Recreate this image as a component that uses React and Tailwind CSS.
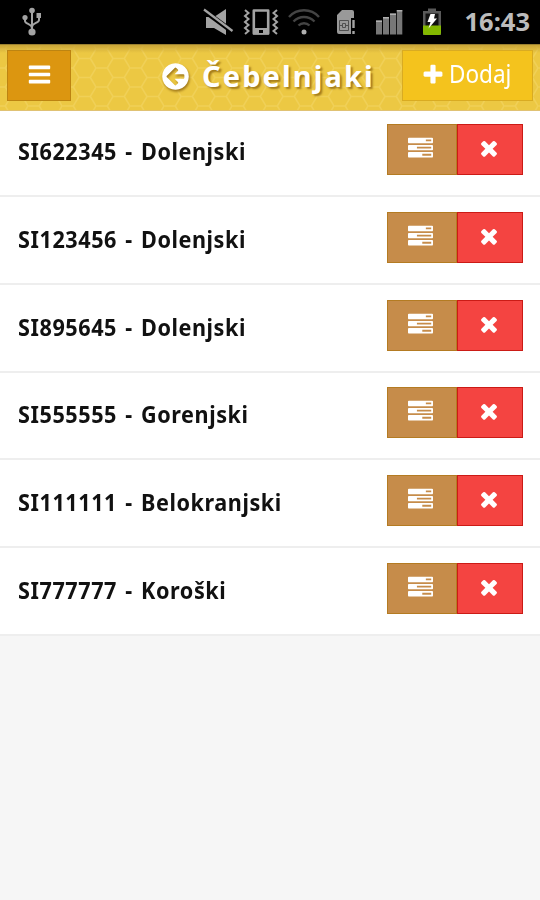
import React from 'react'

const HIVES = [
  'SI622345 - Dolenjski',
  'SI123456 - Dolenjski',
  'SI895645 - Dolenjski',
  'SI555555 - Gorenjski',
  'SI111111 - Belokranjski',
  'SI777777 - Koroški',
]

const GLYPHS = {
  bars: 'M1664 1344v128q0 26-19 45t-45 19h-1408q-26 0-45-19t-19-45v-128q0-26 19-45t45-19h1408q26 0 45 19t19 45zm0-512v128q0 26-19 45t-45 19h-1408q-26 0-45-19t-19-45v-128q0-26 19-45t45-19h1408q26 0 45 19t19 45zm0-512v128q0 26-19 45t-45 19h-1408q-26 0-45-19t-19-45v-128q0-26 19-45t45-19h1408q26 0 45 19t19 45z',
  back: 'M1408 960v-128q0-26-19-45t-45-19h-502l189-189q19-19 19-45t-19-45l-91-91q-18-18-45-18t-45 18l-362 362-91 91q-18 18-18 45t18 45l91 91 362 362q18 18 45 18t45-18l91-91q18-18 18-45t-18-45l-189-189h502q26 0 45-19t19-45zm256-64q0 209-103 385.5t-279.5 279.5-385.5 103-385.5-103-279.5-279.5-103-385.5 103-385.5 279.5-279.5 385.5-103 385.5 103 279.5 279.5 103 385.5z',
  plus: 'M1600 736v192q0 40-28 68t-68 28h-416v416q0 40-28 68t-68 28h-192q-40 0-68-28t-28-68v-416h-416q-40 0-68-28t-28-68v-192q0-40 28-68t68-28h416v-416q0-40 28-68t68-28h192q40 0 68 28t28 68v416h416q40 0 68 28t28 68z',
  tasks: 'M1024 1408h640v-128h-640v128zm-384-512h1024v-128h-1024v128zm640-512h384v-128h-384v128zm512 832v256q0 26-19 45t-45 19h-1664q-26 0-45-19t-19-45v-256q0-26 19-45t45-19h1664q26 0 45 19t19 45zm0-512v256q0 26-19 45t-45 19h-1664q-26 0-45-19t-19-45v-256q0-26 19-45t45-19h1664q26 0 45 19t19 45zm0-512v256q0 26-19 45t-45 19h-1664q-26 0-45-19t-19-45v-256q0-26 19-45t45-19h1664q26 0 45 19t19 45z',
  times: 'M1490 1322q0 40-28 68l-136 136q-28 28-68 28t-68-28l-294-294-294 294q-28 28-68 28t-68-28l-136-136q-28-28-28-68t28-68l294-294-294-294q-28-28-28-68t28-68l136-136q28-28 68-28t68 28l294 294 294-294q28-28 68-28t68 28l136 136q28 28 28 68t-28 68l-294 294 294 294q28 28 28 68z',
}

function Glyph({ name, className }) {
  return (
    <svg viewBox="0 0 1792 1792" fill="currentColor" className={className}>
      <path d={GLYPHS[name]} />
    </svg>
  )
}

function StatusBar() {
  return (
    <div className="flex h-11 items-center bg-black pl-[21px] pr-[10px] text-[#a3a3a3]">
      {/* USB */}
      <svg width="22" height="30" viewBox="0 0 22 30" fill="none" stroke="currentColor" strokeWidth="2">
        <path d="M11 4v20M4 11v3c0 3 7 3 7 7M18 9v4c0 3-7 3-7 7" />
        <g fill="currentColor" stroke="none">
          <circle cx="11" cy="3.5" r="2.8" />
          <circle cx="11" cy="25" r="3.6" />
          <circle cx="4" cy="10.5" r="2.6" />
          <path d="M15.500 6h4.500v5h-4.500z" />
        </g>
      </svg>
      {/* Muted speaker */}
      <svg className="ml-[160px]" width="32" height="30" viewBox="0 0 32 30" fill="currentColor">
        <path d="M3 10h8l12-8v26l-12-7H3z" />
        <path d="M0 3l30 22" stroke="#000" strokeWidth="5" />
        <path d="M1 2.500L29.500 24" stroke="currentColor" strokeWidth="2.2" />
      </svg>
      {/* Vibrate */}
      <svg className="ml-2" width="36" height="30" viewBox="0 0 36 30" fill="none" stroke="currentColor">
        <path d="M10.800 3.500h14.400v23H10.800z" strokeWidth="2.6" strokeLinejoin="round" />
        <path d="M10 21h16v6.500H10z" fill="currentColor" stroke="none" />
        <path d="M16 23h4v3h-4z" fill="#000" stroke="none" />
        <path d="M2 3l3.500 3L2 9l3.500 3L2 15l3.500 3L2 21l3.500 3L2 27M34 3l-3.500 3L34 9l-3.500 3 3.500 3-3.500 3 3.500 3-3.500 3 3.500 3" strokeWidth="2" />
      </svg>
      {/* Wifi */}
      <svg className="ml-[9px]" width="32" height="30" viewBox="0 0 32 30" fill="none" stroke="#444" strokeWidth="2.4">
        <path d="M1 10C9 1 23 1 31 10M5.500 14.500c6-6 15-6 21 0M10.500 18.500c3-3 8-3 11 0" />
        <circle cx="16" cy="25" r="2.5" fill="#b0b0b0" stroke="none" />
      </svg>
      {/* SIM alert */}
      <svg className="ml-[16px]" width="20" height="30" viewBox="0 0 20 30" fill="none">
        <path d="M6 3h10q2 0 2 2v6h-3v16H3q-2 0-2-2V8z" fill="#999" />
        <path d="M3.500 13.500h9v10h-9zM6.500 16.500h3v4h-3zM3.500 18.500h3M9.500 18.500h3" stroke="#505050" strokeWidth="1" />
        <path d="M17.500 13v8M17.500 24v3" stroke="#a3a3a3" strokeWidth="2.4" />
      </svg>
      {/* Signal */}
      <svg className="ml-[19px]" width="28" height="30" viewBox="0 0 28 30" fill="#777">
        <path d="M1 13.500h6v14H1zM8 10h6v17.500H8zM15 6.500h6v21h-6zM21.800 3h5.500v24.500h-5.500z" />
        <path d="M1 13.500h6V15H1zM8 10h6v1.500H8zM15 6.500h6V8h-6zM21.800 3h5.500v1.500h-5.500z" fill="#b0b0b0" />
      </svg>
      {/* Battery */}
      <svg className="ml-[19px]" width="20" height="30" viewBox="0 0 20 30">
        <path d="M6 1.500h8v2.500h5v24H1V4h5z" fill="#5a5a5a" />
        <path d="M3.500 6.500h13v13h-13z" fill="#111" />
        <path d="M1 18.500h18V26q0 2-2 2H3q-2 0-2-2z" fill="#83b800" />
        <path d="M8.500 7H13l-1 4.500h3L6.500 21.500l2-6.500H5.500z" fill="#fff" />
      </svg>
      <span className="ml-auto font-['Noto_Sans'] text-[25.500px] leading-none font-bold text-[#bcbcbc]">16:43</span>
    </div>
  )
}

function Honeycomb() {
  return (
    <svg className="absolute inset-0 h-full w-full">
      <defs>
        <pattern id="comb" width="34" height="19" patternUnits="userSpaceOnUse" x="96" y="23">
          <path d="M0 0h11.300l5.700 9.500h11.300L34 0M11.300 19l5.700-9.500M28.300 9.500L34 19M0 19h11.300" fill="none" stroke="#f4d86b" strokeWidth="1.5" />
        </pattern>
      </defs>
      <rect width="100%" height="100%" fill="url(#comb)" opacity="0.5" />
    </svg>
  )
}

function Header() {
  return (
    <header className="relative z-10 h-[67px] border-t border-b border-t-[#9b8130] border-b-[#e0c274] bg-[#ecc843]">
      <Honeycomb />
      <div className="absolute inset-x-0 top-0 h-2 bg-linear-to-b from-[#c9a538] to-transparent" />
      <div className="relative flex items-start pt-[5px] pr-[7px] pl-[7px]">
        <button className="flex h-[51px] w-[64px] justify-center border border-[#bd8411] bg-[#dc9610] pt-[11px] text-white">
          <Glyph name="bars" className="size-[25px]" />
        </button>
        <h1 className="ml-[89px] flex items-start text-white">
          <Glyph name="back" className="mt-[11px] size-[31px] drop-shadow-[1px_2px_1px_#a37b1b]" />
          <span className="ml-[11px] mt-[6px] font-['Noto_Sans'] text-[29px] leading-[40px] font-bold tracking-[2.1px] whitespace-nowrap [text-shadow:2px_2px_2px_#a37b1b]">
            Čebelnjaki
          </span>
        </h1>
        <button className="ml-auto flex h-[51px] w-[131px] shrink-0 border border-[#d9ab22] bg-[#f4c31d] pl-[18px] text-white">
          <Glyph name="plus" className="mt-[12px] size-6" />
          <span className="ml-[4px] mt-[4px] origin-left scale-x-90 font-['Noto_Sans'] text-[25px] leading-[36px]">Dodaj</span>
        </button>
      </div>
    </header>
  )
}

function HiveRow({ name }) {
  return (
    <li className="flex h-[87.700px] items-start justify-between border-b-[2.500px] border-[#eee] bg-white pt-[14.500px] pr-[17px] pl-[17.500px]">
      <span className="origin-left scale-x-[0.94] pt-[10px] font-['Noto_Sans'] text-[23px] leading-[34px] font-bold tracking-[0.6px] [word-spacing:2.2px] whitespace-nowrap text-[#111]">
        {name}
      </span>
      <div className="flex h-[51px] shrink-0 text-white">
        <button className="flex w-[70px] justify-center border border-[#b47b22] bg-[#c68c4a] pt-[11px] pr-[3px]">
          <Glyph name="tasks" className="size-[25px]" />
        </button>
        <button className="flex w-[66px] justify-center border border-[#cb1b16] bg-[#f44441] pt-[11px] pr-[3px]">
          <Glyph name="times" className="size-6" />
        </button>
      </div>
    </li>
  )
}

export default function App() {
  return (
    <div className="h-[900px] w-[540px] overflow-hidden bg-[#f6f6f6] font-['Noto_Sans',sans-serif]">
      <StatusBar />
      <Header />
      <ul className="-mt-[1.300px]">
        {HIVES.map((name) => (
          <HiveRow key={name} name={name} />
        ))}
      </ul>
    </div>
  )
}
